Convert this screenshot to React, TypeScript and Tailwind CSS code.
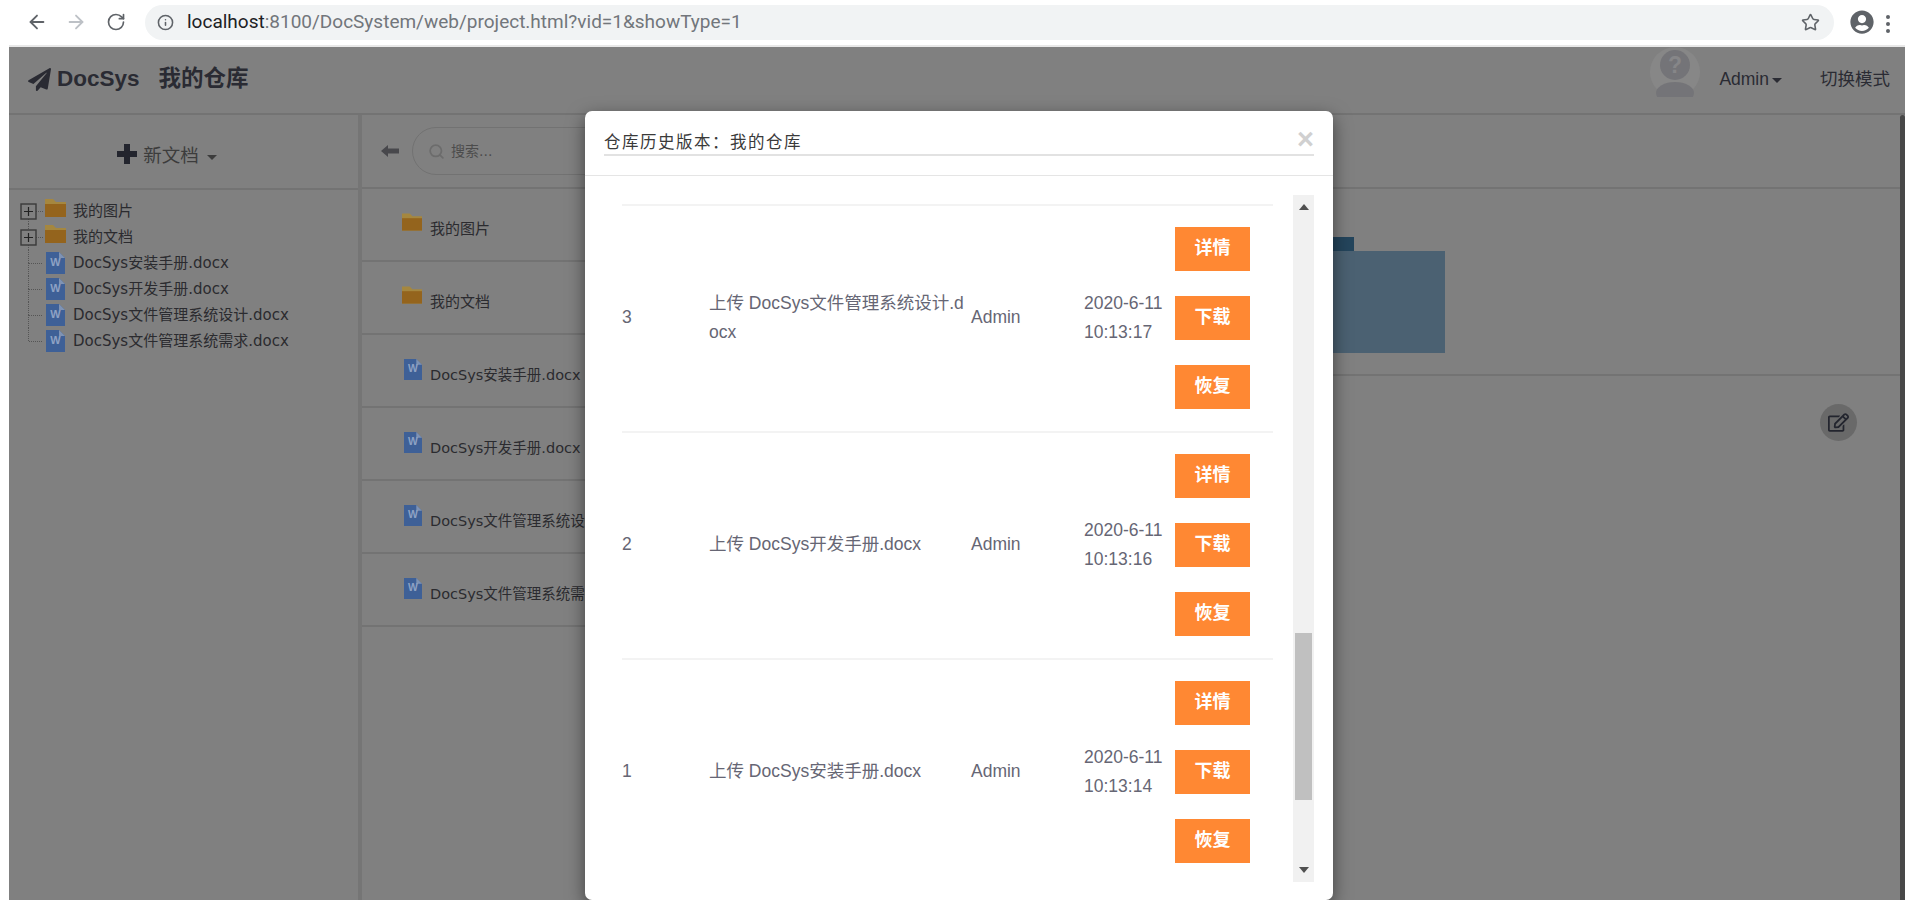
import React from "react";
import { ArrowLeft, ArrowRight, RotateCw, Info, Star, Search } from "lucide-react";
import { FaPaperPlane, FaUserCircle, FaRegEdit } from "react-icons/fa";

const SANS = "font-['Liberation_Sans','Noto_Sans_CJK_SC',sans-serif]";
const WIDE = "font-['DejaVu_Sans','Noto_Sans_CJK_SC',sans-serif]";

const FolderIcon = ({ className }: { className?: string }) => (
  <svg viewBox="0 0 21 18" className={className}>
    <path d="M0 0h8l3 3h10v15H0z" fill="#a5873f" />
    <rect x="0" y="5" width="21" height="13" fill="#94641d" />
  </svg>
);

const WordIcon = ({ className }: { className?: string }) => (
  <svg viewBox="0 0 19 22" className={className}>
    <path d="M0 0h13l6 6v16H0z" fill="#3e6097" />
    <path d="M13 0l6 6h-6z" fill="#7f93b4" />
    <text x="9.5" y="14" textAnchor="middle" fontSize="11" fontWeight="700" fill="#8ea2c4" fontFamily="Liberation Sans">
      W
    </text>
  </svg>
);

type Gutter = "first" | "plus" | "leaf" | "last";

const TreeGutter = ({ kind }: { kind: Gutter }) => {
  const isPlus = kind === "first" || kind === "plus";
  return (
    <svg width="25" height="26" className="shrink-0">
      {kind !== "first" && <line x1="8.5" y1="0" x2="8.5" y2="13" stroke="#555" strokeDasharray="1 1" />}
      {kind !== "last" && <line x1="8.5" y1="13" x2="8.5" y2="26" stroke="#555" strokeDasharray="1 1" />}
      <line x1={isPlus ? 16 : 9} y1="13.5" x2="23" y2="13.5" stroke="#555" strokeDasharray="1 1" />
      {isPlus && (
        <>
          <rect x="1" y="6" width="15" height="15" fill="#808080" stroke="#3a3a3a" strokeWidth="1.4" />
          <path d="M4 13.5h9M8.5 9v9" stroke="#222" strokeWidth="1.2" />
        </>
      )}
    </svg>
  );
};

const treeItems: { name: string; gutter: Gutter; folder?: boolean }[] = [
  { name: "我的图片", gutter: "first", folder: true },
  { name: "我的文档", gutter: "plus", folder: true },
  { name: "DocSys安装手册.docx", gutter: "leaf" },
  { name: "DocSys开发手册.docx", gutter: "leaf" },
  { name: "DocSys文件管理系统设计.docx", gutter: "leaf" },
  { name: "DocSys文件管理系统需求.docx", gutter: "last" },
];

const Sidebar = () => (
  <aside className="flex w-[353px] shrink-0 flex-col border-r-4 border-[#757575]">
    <div className="flex h-[75px] items-center justify-center border-b-2 border-[#737373] pr-[33px] pt-[8px] text-[#3c3c3c]">
      <svg width="20" height="20" viewBox="0 0 20 20" className="mb-[3px]">
        <path d="M10 0v20M0 10h20" stroke="#23252e" strokeWidth="6" />
      </svg>
      <span className={`${SANS} ml-[6px] text-[18.5px]`}>新文档</span>
      <span className="ml-[8px] mt-[3px] border-x-[5px] border-t-[5px] border-x-transparent border-t-[#3c3c3c]" />
    </div>
    <div className={`${WIDE} flex flex-col pl-[11px] pt-[8px] text-[15px] text-[#2b2b2f]`}>
      {treeItems.map((item) => (
        <div key={item.name} className="flex h-[26px] items-center">
          <TreeGutter kind={item.gutter} />
          {item.folder ? (
            <FolderIcon className="mb-[6px] h-[18px] w-[21px] shrink-0" />
          ) : (
            <WordIcon className="ml-[1px] h-[22px] w-[19px] shrink-0" />
          )}
          <span className={item.folder ? "ml-[7px]" : "ml-[8px]"}>{item.name}</span>
        </div>
      ))}
    </div>
  </aside>
);

const listItems: { name: string; folder?: boolean }[] = [
  { name: "我的图片", folder: true },
  { name: "我的文档", folder: true },
  { name: "DocSys安装手册.docx" },
  { name: "DocSys开发手册.docx" },
  { name: "DocSys文件管理系统设计.docx" },
  { name: "DocSys文件管理系统需求.docx" },
];

const MainPanel = () => (
  <main className="flex min-w-0 flex-1 flex-col">
    <div className="flex h-[74px] items-center border-b-2 border-[#737373] pl-[19px]">
      <svg width="18" height="12" viewBox="0 0 18 12" className="shrink-0">
        <path d="M0 6l7-6v3.5h11v5H7V12z" fill="#48484c" />
      </svg>
      <div className="ml-[13px] flex h-[48px] w-[320px] items-center rounded-full border border-[#727272] pl-[15px]">
        <Search className="h-[17px] w-[17px] text-[#6c6c6c]" strokeWidth={2.5} />
        <span className={`${WIDE} ml-[6px] text-[14px] text-[#4c4c4c]`}>搜索...</span>
      </div>
    </div>
    <div className="flex flex-1">
      <div className={`${WIDE} flex w-[470px] shrink-0 flex-col text-[#2b2b2f]`}>
        {listItems.map((item) => (
          <div key={item.name} className="flex h-[73px] border-b-2 border-[#737373] pl-[40px]">
            {item.folder ? (
              <FolderIcon className="mt-[24px] h-[18px] w-[20px] shrink-0" />
            ) : (
              <WordIcon className="ml-[2px] mt-[24px] h-[21px] w-[18px] shrink-0" />
            )}
            <span className={item.folder ? "ml-[8px] mt-[29px] text-[15px]" : "ml-[8px] mt-[30px] whitespace-nowrap text-[14.5px]"}>
              {item.name}
            </span>
          </div>
        ))}
      </div>
      <div className="flex flex-1 flex-col pr-[5px]">
        <div className="h-[187px] border-b-2 border-[#737373] pl-[333px] pt-[48px]">
          <div className="h-[14px] w-[189px] bg-[#24455c]" />
          <div className="h-[102px] w-[280px] bg-[#4b6172]" />
        </div>
        <div className="flex justify-end pr-[43px] pt-[28px]">
          <div className="flex h-[37px] w-[37px] items-center justify-center rounded-full bg-[#696969]">
            <FaRegEdit className="text-[21px] text-[#23252e]" />
          </div>
        </div>
      </div>
    </div>
  </main>
);

type Version = { id: number; lines: string; date: string; time: string };

const versions: Version[] = [
  { id: 3, lines: "上传 DocSys文件管理系统设计.docx", date: "2020-6-11", time: "10:13:17" },
  { id: 2, lines: "上传 DocSys开发手册.docx", date: "2020-6-11", time: "10:13:16" },
  { id: 1, lines: "上传 DocSys安装手册.docx", date: "2020-6-11", time: "10:13:14" },
];

const VersionRow = ({ v }: { v: Version }) => (
  <div className="grid h-[227px] grid-cols-[87px_262px_113px_91px_1fr] items-center border-t-2 border-[#f3f3f3] pb-[2px] text-[17.5px] leading-[29px] text-[#666674]">
    <div>{v.id}</div>
    <div className="w-[256px] break-all">{v.lines}</div>
    <div>Admin</div>
    <div>
      {v.date}
      <br />
      {v.time}
    </div>
    <div className="flex flex-col gap-[25px]">
      {["详情", "下载", "恢复"].map((label) => (
        <div key={label} className="flex h-[44px] w-[75px] items-center justify-center bg-[#ff8833] text-[18px] font-bold text-white">
          {label}
        </div>
      ))}
    </div>
  </div>
);

const HistoryModal = () => (
  <div className={`${SANS} absolute left-[576px] top-[64px] h-[789px] w-[748px] overflow-hidden rounded-[7px] bg-white shadow-[0_6px_18px_rgba(0,0,0,0.5)]`}>
    <div className="h-[65px] border-b border-[#e5e5e5] px-[19px] pt-[20px]">
      <div className="flex h-[25px] items-center justify-between border-b-2 border-[#e2e2e2]">
        <span className="text-[16.5px] tracking-[1.5px] text-[#3a3a3a]">仓库历史版本：我的仓库</span>
        <span className="mb-[6px] text-[29px] font-bold leading-none text-[#d0d0d0]">×</span>
      </div>
    </div>
    <div className="flex pl-[37px] pt-[19px]">
      <div className="w-[651px] pt-[9px]">
        {versions.map((v) => (
          <VersionRow key={v.id} v={v} />
        ))}
      </div>
      <div className="ml-[20px] flex h-[687px] w-[21px] flex-col items-center bg-[#f1f1f1]">
        <span className="mt-[9px] border-x-[5px] border-b-[6px] border-x-transparent border-b-[#505050]" />
        <div className="mt-[423px] h-[167px] w-[17px] bg-[#c0c0c0]" />
        <span className="mt-[67px] border-x-[5px] border-t-[6px] border-x-transparent border-t-[#505050]" />
      </div>
    </div>
  </div>
);

const BrowserBar = () => (
  <div className="flex h-[45px] items-start bg-white">
    <div className="flex h-[44px] w-[145px] items-center text-[#5f6368]">
      <ArrowLeft className="ml-[26px] h-[22px] w-[22px]" strokeWidth={2} />
      <ArrowRight className="ml-[17px] h-[22px] w-[22px] text-[#bdc1c6]" strokeWidth={2} />
      <RotateCw className="ml-[19px] h-[20px] w-[20px]" strokeWidth={2} />
    </div>
    <div className="mt-[5px] flex h-[35px] w-[1689px] items-center rounded-full bg-[#f1f3f4] pl-[12px] pr-[14px]">
      <Info className="h-[17px] w-[17px] text-[#5f6368]" strokeWidth={2.2} />
      <span className="ml-[13px] whitespace-nowrap font-['Roboto',sans-serif] text-[19px] text-[#72767b]">
        <span className="text-[#202124]">localhost</span>:8100/DocSystem/web/project.html?vid=1&amp;showType=1
      </span>
      <Star className="ml-auto h-[19px] w-[19px] text-[#5f6368]" strokeWidth={2} />
    </div>
    <FaUserCircle className="ml-[16px] mt-[10px] h-[24px] w-[24px] shrink-0 text-[#5f6368]" />
    <div className="ml-[12px] mt-[15px] flex flex-col gap-[3px]">
      <span className="h-[4px] w-[4px] rounded-full bg-[#5f6368]" />
      <span className="h-[4px] w-[4px] rounded-full bg-[#5f6368]" />
      <span className="h-[4px] w-[4px] rounded-full bg-[#5f6368]" />
    </div>
  </div>
);

const AvatarGlyph = () => (
  <svg width="50" height="50" viewBox="0 0 50 50" className="self-start">
    <circle cx="25" cy="25" r="25" fill="#878787" />
    <circle cx="25" cy="18" r="15" fill="#747478" />
    <ellipse cx="25" cy="46" rx="19" ry="11" fill="#747478" />
    <text x="25" y="26" textAnchor="middle" fontSize="23" fontWeight="700" fill="#868688" fontFamily="Liberation Sans">
      ?
    </text>
  </svg>
);

const TopNav = () => (
  <header className={`${SANS} flex h-[68px] items-center border-b-2 border-[#737373] pb-[2px] pl-[19px] text-[#2a2b33]`}>
    <FaPaperPlane className="text-[23px] text-[#2a2b33]" />
    <span className="ml-[6px] text-[22.5px] font-bold">DocSys</span>
    <span className="ml-[19px] text-[22.5px] font-bold">我的仓库</span>
    <div className="ml-auto flex h-full items-center pr-[15px] text-[17.5px]">
      <AvatarGlyph />
      <span className="ml-[19px]">Admin</span>
      <span className="ml-[3px] mt-[3px] border-x-[5px] border-t-[5px] border-x-transparent border-t-[#2a2b33]" />
      <span className="ml-[38px]">切换模式</span>
    </div>
  </header>
);

export default function App() {
  return (
    <div className="h-[900px] w-[1905px] overflow-hidden bg-white">
      <BrowserBar />
      <div className="ml-[9px] h-[2px] bg-[#e8e8e8]" />
      <div className="relative ml-[9px] h-[853px] bg-[#808080]">
        <TopNav />
        <div className="flex h-[785px]">
          <Sidebar />
          <MainPanel />
        </div>
        <div className="absolute right-0 top-[68px] h-[785px] w-[5px] rounded-t-[3px] bg-[#484848]" />
        <HistoryModal />
      </div>
    </div>
  );
}
